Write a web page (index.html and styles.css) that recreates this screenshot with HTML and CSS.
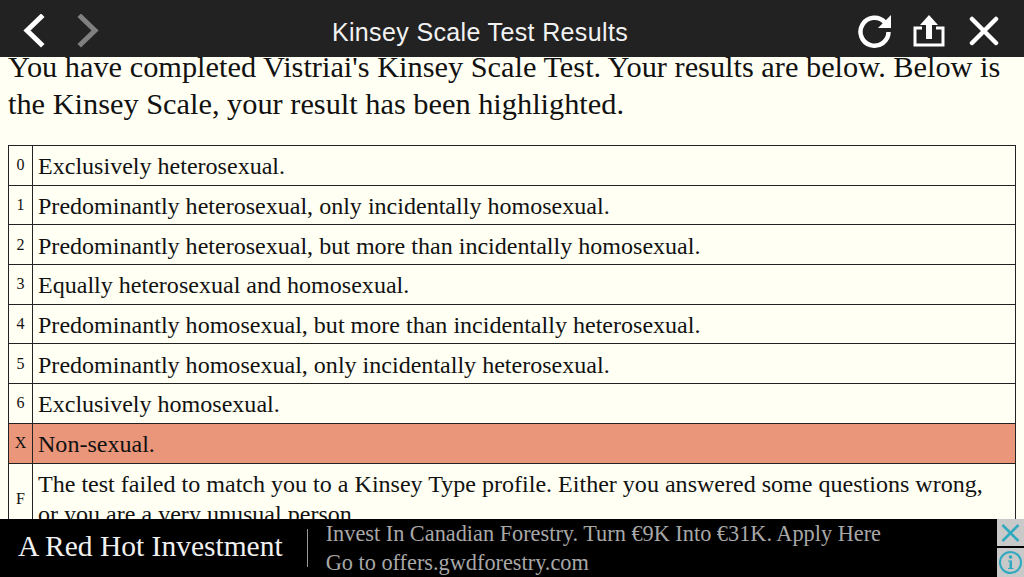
FILE: index.html
```html
<!DOCTYPE html>
<html lang="en">
	<head>
		<title>Kinsey Scale Test Results</title>
		<meta charset="utf-8" />
		<link rel="stylesheet" href="styles.css">
	</head>
	<body>
		<div class="topbar">
			<div class="nav-btns">
				<svg class="icon" width="28" height="34" viewBox="0 0 28 34"><path d="M21 3 L7 16.500 L21 30" fill="none" stroke="#fff" stroke-width="5" stroke-linecap="square"/></svg>
				<svg class="icon" width="28" height="34" viewBox="0 0 28 34"><path d="M7 3 L21 16.500 L7 30" fill="none" stroke="#808080" stroke-width="5" stroke-linecap="square"/></svg>
			</div>
			<div class="title">Kinsey Scale Test Results</div>
			<div class="action-btns">
				<svg class="icon" width="36" height="36" viewBox="0 0 36 36"><path d="M27 9.500 A14 14 0 1 0 30.500 19" fill="none" stroke="#fff" stroke-width="4.500"/><path d="M20 15 L33 15 L33 2 Z" fill="#fff"/></svg>
				<svg class="icon share" width="34" height="36" viewBox="0 0 34 36"><path d="M10 15 H3 V32 H31 V15 H24" fill="none" stroke="#fff" stroke-width="3"/><path d="M17 2 L26 12 H20 V26 H14 V12 H8 Z" fill="#fff"/></svg>
				<svg class="icon" width="30" height="30" viewBox="0 0 30 30"><path d="M3 3 L27 27 M27 3 L3 27" fill="none" stroke="#fff" stroke-width="4.500" stroke-linecap="round"/></svg>
			</div>
		</div>

		<div class="content">
			<p class="intro">You have completed Vistriai's Kinsey Scale Test. Your results are below. Below is the Kinsey Scale, your result has been highlighted.</p>
			<table class="scale">
				<tr><td class="key">0</td><td>Exclusively heterosexual.</td></tr>
				<tr><td class="key">1</td><td>Predominantly heterosexual, only incidentally homosexual.</td></tr>
				<tr><td class="key">2</td><td>Predominantly heterosexual, but more than incidentally homosexual.</td></tr>
				<tr><td class="key">3</td><td>Equally heterosexual and homosexual.</td></tr>
				<tr><td class="key">4</td><td>Predominantly homosexual, but more than incidentally heterosexual.</td></tr>
				<tr><td class="key">5</td><td>Predominantly homosexual, only incidentally heterosexual.</td></tr>
				<tr><td class="key">6</td><td>Exclusively homosexual.</td></tr>
				<tr class="hit"><td class="key">X</td><td>Non-sexual.</td></tr>
				<tr><td class="key">F</td><td class="long">The test failed to match you to a Kinsey Type profile. Either you answered some questions wrong, or you are a very unusual person.</td></tr>
			</table>
		</div>

		<div class="ad">
			<div class="ad-name">A Red Hot Investment</div>
			<div class="ad-sep"></div>
			<div class="ad-text">
				<div>Invest In Canadian Forestry. Turn €9K Into €31K. Apply Here</div>
				<div>Go to offers.gwdforestry.com</div>
			</div>
			<div class="ad-btns">
				<div class="ad-btn close">
					<svg width="27" height="27" viewBox="0 0 27 27"><path d="M5.500 6 L21.500 22 M21.500 6 L5.500 22" fill="none" stroke="#2fa9c0" stroke-width="2.500"/></svg>
				</div>
				<div class="ad-btn info">
					<svg width="27" height="29" viewBox="0 0 27 29"><circle cx="13.500" cy="14.500" r="10.500" fill="none" stroke="#2fa9c0" stroke-width="2"/><circle cx="13.500" cy="9" r="1.800" fill="#2fa9c0"/><path d="M11 12.500 H15 V20 H16.500 V21 H11 V20 H12.500 V13.500 H11 Z" fill="#2fa9c0"/></svg>
				</div>
			</div>
		</div>
	</body>
</html>
```

FILE: styles.css
```css
body {
	margin: 0;
	height: 100vh;
	overflow: hidden;
	display: flex;
	flex-direction: column;
	background: #fffff3;
	color: #111;
	font-family: "Liberation Serif", serif;
}

.topbar {
	flex: none;
	height: 57px;
	background: #222222;
	display: flex;
	align-items: center;
	justify-content: space-between;
	padding: 4px 25px 0 20px;
	box-sizing: border-box;
	position: relative;
	z-index: 2;
}
.icon {
	display: block;
}
.nav-btns {
	display: flex;
	gap: 26px;
}
.action-btns {
	display: flex;
	align-items: center;
	gap: 18px;
}
.share {
	margin-right: 5px;
}
.title {
	color: #f2f2f2;
	font-family: "Liberation Sans", sans-serif;
	font-size: 25px;
	letter-spacing: 0.36px;
	margin: 4px 0 0 0;
}

.content {
	flex: 1;
	min-height: 0;
	overflow: hidden;
	padding: 0 8px;
}
.intro {
	margin: -8px 0 22px;
	font-size: 30.350px;
	line-height: 37px;
}
.scale {
	width: 100%;
	border-collapse: collapse;
	font-size: 24.050px;
}
.scale td {
	border: 1px solid #222;
	padding: 2px 5px 0;
	height: 36.700px;
	line-height: 30px;
}
.scale .key {
	width: 13px;
	padding: 0 5px;
	font-size: 16px;
	text-align: center;
}
.hit td {
	background: #e9967a;
}
.scale .long {
	padding: 5px 25px 6px 5px;
}

.ad {
	flex: none;
	height: 58px;
	background: #000;
	display: flex;
	align-items: center;
	font-family: "Liberation Serif", serif;
}
.ad-name {
	color: #f0f0f0;
	font-size: 29.500px;
	padding: 0 24px 3px 18px;
	white-space: nowrap;
}
.ad-sep {
	width: 1px;
	height: 38px;
	background: #999;
}
.ad-text {
	flex: 1;
	color: #a8a8a8;
	font-size: 22.300px;
	line-height: 29px;
	padding-left: 18px;
	white-space: nowrap;
}
.ad-btns {
	width: 27px;
	display: flex;
	flex-direction: column;
	gap: 2px;
}
.ad-btn {
	background: #c9c9c9;
	display: flex;
}
.ad-btn svg {
	display: block;
}
```
